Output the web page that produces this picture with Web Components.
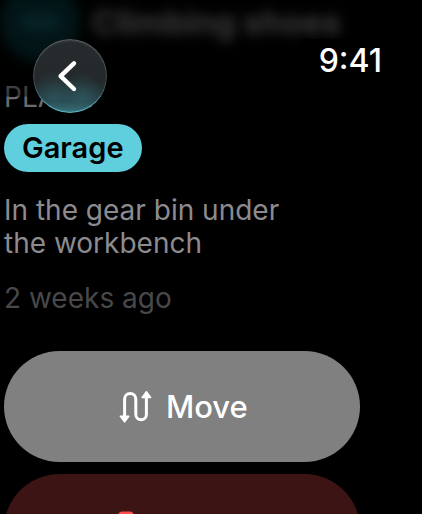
<!DOCTYPE html>
<html lang="en">
<head>
  <meta charset="utf-8">
  <meta name="viewport" content="width=device-width, initial-scale=1">
  <title>Climbing shoes</title>
  <style>
    html, body {
      margin: 0;
      background: #000;
    }
    body {
      font-family: Inter, "Liberation Sans", sans-serif;
      color: #fff;
    }
  </style>
</head>
<body>
  <watch-screen>
    <nav-bar slot="bar">9:41</nav-bar>
    <item-title>Climbing shoes</item-title>
    <place-details>
      <span slot="label">PLACE</span>
      <span slot="place">Garage</span>
      <span slot="note">In the gear bin under the workbench</span>
      <span slot="time">2 weeks ago</span>
    </place-details>
    <action-list></action-list>
  </watch-screen>

  <script>
    class WatchScreen extends HTMLElement {
      constructor() {
        super()
        this.attachShadow({ mode: 'open' })
      }

      connectedCallback() {
        this.shadowRoot.innerHTML = `
          <style>
            :host {
              display: block;
              position: relative;
              height: 100vh;
              overflow: hidden;
              background: #000;
            }
            header {
              position: absolute;
              inset: 0 0 auto;
              z-index: 1;
            }
            main {
              display: flex;
              flex-direction: column;
              margin-top: -20px;
              padding: 0 62px 0 4px;
            }
          </style>
          <header><slot name="bar"></slot></header>
          <main><slot></slot></main>
        `
      }
    }

    class NavBar extends HTMLElement {
      constructor() {
        super()
        this.attachShadow({ mode: 'open' })
      }

      connectedCallback() {
        this.shadowRoot.innerHTML = `
          <style>
            :host {
              display: flex;
              justify-content: space-between;
              align-items: flex-start;
              padding: 39px 0 0 33px;
              background: linear-gradient(rgb(0 0 0 / 0.2) 60%, rgb(0 0 0 / 0.5) 85%, transparent 86%);
            }
            button {
              display: grid;
              place-items: center;
              width: 74px;
              height: 74px;
              padding: 0;
              border: 0;
              border-radius: 50%;
              color: #fff;
              background:
                radial-gradient(ellipse at 30% 78%, rgb(48 98 106 / 0.5), transparent 32%),
                radial-gradient(ellipse at 66% 80%, rgb(48 98 106 / 0.6), transparent 30%),
                linear-gradient(#262c2e, #242a2c 58%, #28444a 85%, #3b7b84);
              box-shadow:
                inset 0 -2px 1px -1px #59bcc9,
                inset 0 0 0 1px rgb(255 255 255 / 0.13),
                inset 0 2px 2px rgb(255 255 255 / 0.12);
            }
            time {
              padding: 2px 40px 2px 17px;
              font-size: 32px;
              line-height: 40px;
              font-weight: 500;
              background: #000;
            }
          </style>
          <button aria-label="Back">
            <svg width="74" height="74" viewBox="0 0 74 74" fill="none" stroke="currentColor" stroke-width="4.4" stroke-linecap="round" stroke-linejoin="round" aria-hidden="true">
              <path d="M41 24.3 27.6 37.2 41 50"/>
            </svg>
          </button>
          <time><slot></slot></time>
        `
      }
    }

    class ItemTitle extends HTMLElement {
      constructor() {
        super()
        this.attachShadow({ mode: 'open' })
      }

      connectedCallback() {
        this.shadowRoot.innerHTML = `
          <style>
            :host {
              display: flex;
              align-items: center;
              gap: 12px;
              height: 84px;
              margin-left: -4px;
              filter: blur(6px);
            }
            .badge {
              display: grid;
              place-items: center;
              flex: none;
              width: 80px;
              height: 80px;
              border-radius: 50%;
              background: #02191c;
            }
            .badge i {
              width: 44px;
              height: 20px;
              border-radius: 10px;
              background: #07282d;
            }
            h1 {
              margin: 0;
              font-size: 33px;
              line-height: 40px;
              font-weight: 700;
              white-space: nowrap;
              color: #4a4a4a;
            }
          </style>
          <div class="badge"><i></i></div>
          <h1><slot></slot></h1>
        `
      }
    }

    class PlaceDetails extends HTMLElement {
      constructor() {
        super()
        this.attachShadow({ mode: 'open' })
      }

      connectedCallback() {
        this.shadowRoot.innerHTML = `
          <style>
            :host {
              display: flex;
              flex-direction: column;
              align-items: flex-start;
              gap: 22px;
              padding-top: 17px;
              font-size: 28px;
              line-height: 33px;
            }
            section {
              display: flex;
              flex-direction: column;
              align-items: flex-start;
              gap: 10px;
            }
            h2, p {
              margin: 0;
              font-size: inherit;
              font-weight: 400;
            }
            h2 {
              color: #6c6c70;
            }
            .place {
              padding: 0 18px;
              border-radius: 24px;
              font-size: 29px;
              line-height: 48px;
              font-weight: 600;
              color: #000;
              background: #5fcedd;
            }
            .note {
              padding-right: 44px;
              color: #8b8b90;
            }
            .time {
              color: #48484a;
            }
          </style>
          <section>
            <h2><slot name="label"></slot></h2>
            <p class="place"><slot name="place"></slot></p>
          </section>
          <p class="note"><slot name="note"></slot></p>
          <p class="time"><slot name="time"></slot></p>
        `
      }
    }

    class ActionList extends HTMLElement {
      constructor() {
        super()
        this.attachShadow({ mode: 'open' })
      }

      connectedCallback() {
        this.shadowRoot.innerHTML = `
          <style>
            :host {
              display: flex;
              flex-direction: column;
              gap: 12px;
              padding-top: 36px;
            }
            button {
              display: flex;
              align-items: center;
              gap: 14px;
              height: 111px;
              padding: 0 0 0 32%;
              border: 0;
              border-radius: 56px;
              font: 500 31px/40px Inter, "Liberation Sans", sans-serif;
              color: #fff;
              background: #808080;
            }
            .delete {
              padding-left: 31%;
              color: #ff4f4b;
              background: #3c1414;
            }
          </style>
          <button>
            <svg width="34" height="34" viewBox="0 0 34 34" fill="none" stroke="currentColor" stroke-width="3" aria-hidden="true">
              <path d="M6.6 26V9a5.6 5.6 0 0 1 11.2 0v15.500a5.300 5.300 0 0 0 10.600 0V7"/>
              <path d="M2.400 26.200h8.400L6.600 31.800zM24.200 7.500h8.400L28.400 1.800z" fill="currentColor" stroke-width="1.600" stroke-linejoin="round"/>
            </svg>
            Move
          </button>
          <button class="delete" aria-label="Delete">
            <svg width="24" height="38" viewBox="0 0 24 38" fill="none" stroke="currentColor" stroke-width="3" stroke-linecap="round" stroke-linejoin="round" aria-hidden="true">
              <path d="M2 8h20M6 8V4Q6 2 8 2h8Q18 2 18 4V8M3 8l2 25q0 3 3 3h8q3 0 3-3l2-25M8.500 14v16M12 14v16M15.500 14v16"/>
            </svg>
          </button>
        `
      }
    }

    customElements.define('watch-screen', WatchScreen)
    customElements.define('nav-bar', NavBar)
    customElements.define('item-title', ItemTitle)
    customElements.define('place-details', PlaceDetails)
    customElements.define('action-list', ActionList)
  </script>
</body>
</html>
